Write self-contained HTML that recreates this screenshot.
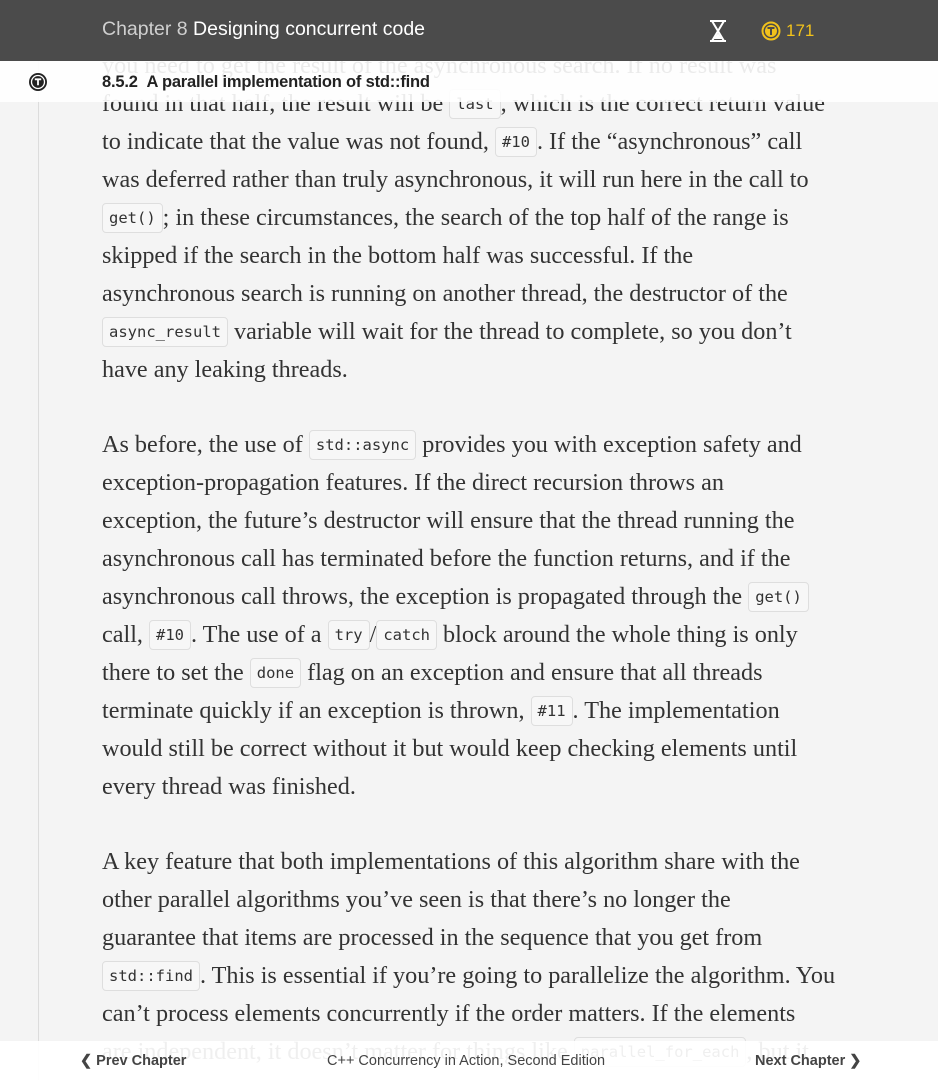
<!DOCTYPE html>
<html><head><meta charset="utf-8"><style>
*{margin:0;padding:0;box-sizing:border-box}
body{width:938px;height:1080px;overflow:hidden;background:#f4f4f4;position:relative;font-family:"Liberation Serif",serif;color:#333}
.rule{position:absolute;left:38px;top:0;width:1px;height:1080px;background:#dcdcdc}
.p{position:absolute;left:102px;font-size:24.2px;}
.p div{height:38px;line-height:38px;white-space:nowrap}
code{font-family:"DejaVu Sans Mono","Liberation Mono",monospace;font-size:15.5px;background:#f7f7f7;border:1px solid #dedede;border-radius:4px;padding:5px 6px;color:#333;vertical-align:2px}
.top{position:absolute;left:0;top:0;width:938px;height:61px;background:#4b4b4b;font-family:"Liberation Sans",sans-serif}
.top .t{position:absolute;left:102px;top:18px;font-size:19.5px;color:#fff}
.top .t span{color:#cfcfcf}
.sub{position:absolute;left:0;top:61px;width:938px;height:41px;background:rgba(255,255,255,.9);font-family:"Liberation Sans",sans-serif}
.sub .t{position:absolute;left:102px;top:12px;font-size:16.5px;font-weight:bold;color:#222;letter-spacing:-.2px}
.foot{position:absolute;left:0;top:1041px;width:938px;height:39px;background:rgba(255,255,255,.92);font-family:"Liberation Sans",sans-serif;font-size:14.5px;color:#444}
.foot span{position:absolute;top:12px}
</style></head><body>
<div class="rule"></div>
<div class="p" style="top:47px">
<div>you need to get the result of the asynchronous search. If no result was</div>
<div>found in that half, the result will be <code>last</code>, which is the correct return value</div>
<div>to indicate that the value was not found, <code>#10</code>. If the “asynchronous” call</div>
<div>was deferred rather than truly asynchronous, it will run here in the call to</div>
<div><code>get()</code>; in these circumstances, the search of the top half of the range is</div>
<div>skipped if the search in the bottom half was successful. If the</div>
<div>asynchronous search is running on another thread, the destructor of the</div>
<div><code>async_result</code> variable will wait for the thread to complete, so you don’t</div>
<div>have any leaking threads.</div>
</div>
<div class="p" style="top:426px">
<div>As before, the use of <code>std::async</code> provides you with exception safety and</div>
<div>exception-propagation features. If the direct recursion throws an</div>
<div>exception, the future’s destructor will ensure that the thread running the</div>
<div>asynchronous call has terminated before the function returns, and if the</div>
<div>asynchronous call throws, the exception is propagated through the <code>get()</code></div>
<div>call, <code>#10</code>. The use of a <code>try</code>/<code>catch</code> block around the whole thing is only</div>
<div>there to set the <code>done</code> flag on an exception and ensure that all threads</div>
<div>terminate quickly if an exception is thrown, <code>#11</code>. The implementation</div>
<div>would still be correct without it but would keep checking elements until</div>
<div>every thread was finished.</div>
</div>
<div class="p" style="top:843px">
<div>A key feature that both implementations of this algorithm share with the</div>
<div>other parallel algorithms you’ve seen is that there’s no longer the</div>
<div>guarantee that items are processed in the sequence that you get from</div>
<div><code>std::find</code>. This is essential if you’re going to parallelize the algorithm. You</div>
<div>can’t process elements concurrently if the order matters. If the elements</div>
<div>are independent, it doesn’t matter for things like <code>parallel_for_each</code>, but it</div>
</div>
<div class="top">
<div class="t"><span>Chapter 8</span> Designing concurrent code</div>
<svg style="position:absolute;left:708px;top:20px" width="20" height="22" viewBox="0 0 20 22"><path d="M2 1h16M2 21h16M4 1 L10 11 L4 21 M16 1 L10 11 L16 21" stroke="#fff" stroke-width="2" fill="none"/><path d="M6 19 L10 13 L14 19Z" fill="#fff"/></svg>
<svg style="position:absolute;left:761px;top:21px" width="20" height="20" viewBox="0 0 20 20"><circle cx="10" cy="10" r="8.5" fill="none" stroke="#f2c21b" stroke-width="2"/><circle cx="10" cy="10" r="6" fill="#f2c21b"/><path d="M6.5 7h7M10 7v7" stroke="#4b4b4b" stroke-width="2"/></svg>
<div style="position:absolute;left:786px;top:21px;font-size:17px;color:#f2c21b">171</div>
</div>
<div class="sub">
<svg style="position:absolute;left:28px;top:11px" width="20" height="20" viewBox="0 0 20 20"><circle cx="10" cy="10" r="9" fill="#222"/><circle cx="10" cy="10" r="6.5" fill="none" stroke="#fff" stroke-width="1.3"/><path d="M6.8 7.3h6.4M10 7.3v6" stroke="#fff" stroke-width="1.8"/></svg>
<div class="t">8.5.2&nbsp;&nbsp;A parallel implementation of std::find</div>
</div>
<div class="foot">
<span style="left:80px;font-weight:bold">❮ Prev Chapter</span>
<span style="left:327px">C++ Concurrency in Action, Second Edition</span>
<span style="left:755px;font-weight:bold">Next Chapter ❯</span>
</div>
</body></html>
